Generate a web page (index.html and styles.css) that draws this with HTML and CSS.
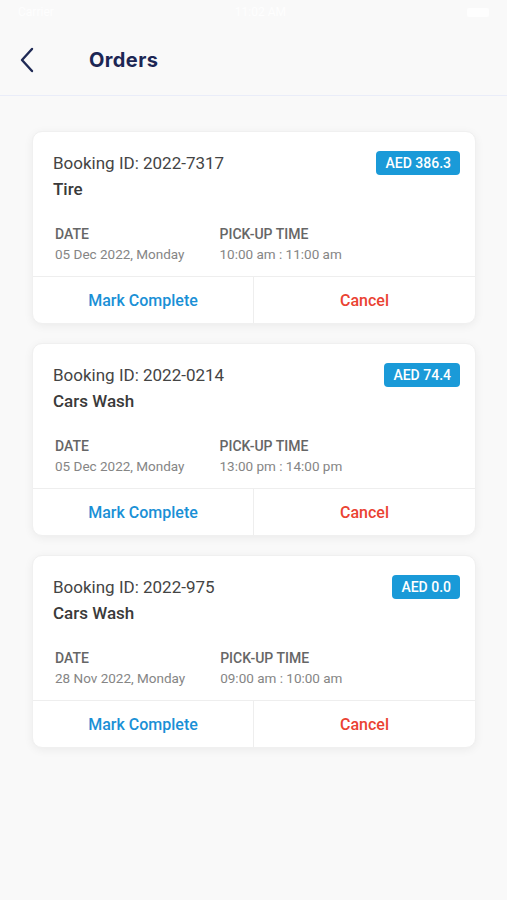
FILE: index.html
```html
<!DOCTYPE html>
<html lang="en">

<head>
  <meta charset="utf-8">
  <meta name="viewport" content="width=device-width, initial-scale=1.0" />
  <title>Orders</title>
  <link rel="stylesheet" href="styles.css">
</head>

<body>
  <div class="status-bar">
    <span>Carrier</span>
    <span>11:02 AM</span>
    <span class="battery"></span>
  </div>
  <header class="nav">
    <a href="#" class="back" aria-label="Back">
      <svg width="16" height="26" viewBox="0 0 16 26">
        <path d="M13 2 L3 13 L13 24" fill="none" stroke="#1f2a55" stroke-width="2.4" stroke-linecap="round" stroke-linejoin="round" />
      </svg>
    </a>
    <h1 class="nav-title">Orders</h1>
  </header>

  <main class="orders">
    <div class="order-card">
      <div class="order-head">
        <div class="booking">Booking ID: 2022-7317</div>
        <span class="price">AED 386.3</span>
      </div>
      <div class="service">Tire</div>
      <div class="order-info">
        <div class="info-col">
          <div class="info-label">DATE</div>
          <div class="info-value">05 Dec 2022, Monday</div>
        </div>
        <div class="info-col">
          <div class="info-label">PICK-UP TIME</div>
          <div class="info-value">10:00 am : 11:00 am</div>
        </div>
      </div>
      <div class="order-actions">
        <a href="#" class="action complete">Mark Complete</a>
        <a href="#" class="action cancel">Cancel</a>
      </div>
    </div>

    <div class="order-card">
      <div class="order-head">
        <div class="booking">Booking ID: 2022-0214</div>
        <span class="price">AED 74.4</span>
      </div>
      <div class="service">Cars Wash</div>
      <div class="order-info">
        <div class="info-col">
          <div class="info-label">DATE</div>
          <div class="info-value">05 Dec 2022, Monday</div>
        </div>
        <div class="info-col">
          <div class="info-label">PICK-UP TIME</div>
          <div class="info-value">13:00 pm : 14:00 pm</div>
        </div>
      </div>
      <div class="order-actions">
        <a href="#" class="action complete">Mark Complete</a>
        <a href="#" class="action cancel">Cancel</a>
      </div>
    </div>

    <div class="order-card">
      <div class="order-head">
        <div class="booking">Booking ID: 2022-975</div>
        <span class="price">AED 0.0</span>
      </div>
      <div class="service">Cars Wash</div>
      <div class="order-info">
        <div class="info-col">
          <div class="info-label">DATE</div>
          <div class="info-value">28 Nov 2022, Monday</div>
        </div>
        <div class="info-col">
          <div class="info-label">PICK-UP TIME</div>
          <div class="info-value">09:00 am : 10:00 am</div>
        </div>
      </div>
      <div class="order-actions">
        <a href="#" class="action complete">Mark Complete</a>
        <a href="#" class="action cancel">Cancel</a>
      </div>
    </div>
  </main>
</body>

</html>
```

FILE: styles.css
```css
body {
  margin: 0;
  background-color: #f9f9f9;
  font-family: Roboto, "Liberation Sans", sans-serif;
  color: #444;
}

a {
  text-decoration: none;
}

.status-bar {
  height: 24px;
  padding: 0 18px;
  display: flex;
  justify-content: space-between;
  align-items: center;
  font-size: 12px;
  color: #fefefe;
}

.battery {
  width: 22px;
  height: 9px;
  border-radius: 2px;
  background-color: #fefefe;
}

.nav {
  height: 71px;
  display: flex;
  align-items: center;
  border-bottom: 1px solid #eaedf9;
}

.back {
  display: flex;
  margin-left: 19px;
  width: 16px;
}

.nav-title {
  margin: 0 0 0 54px;
  font-family: Inter, "Open Sans", sans-serif;
  font-size: 20px;
  font-weight: 700;
  letter-spacing: 0.4px;
  color: #1c2654;
}

.orders {
  padding: 35px 31px 40px 32px;
  display: flex;
  flex-direction: column;
  gap: 19px;
}

.order-card {
  background-color: #fff;
  border-radius: 10px;
  border: 1px solid #f0f0f0;
  box-shadow: 0 2px 10px rgba(0, 0, 0, 0.06);
  overflow: hidden;
}

.order-head {
  display: flex;
  justify-content: space-between;
  align-items: center;
  padding: 19px 15px 0 20px;
}

.booking {
  font-size: 17px;
  line-height: 24px;
  color: #444;
}

.price {
  padding: 0 9px;
  line-height: 24px;
  border-radius: 4px;
  background-color: #1a9ad8;
  color: #fff;
  font-size: 14px;
  font-weight: 500;
}

.service {
  padding-left: 20px;
  font-size: 17px;
  line-height: 28px;
  font-weight: 500;
  color: #3a3a3a;
}

.order-info {
  display: flex;
  gap: 35px;
  padding: 21px 20px 12px 22px;
}

.info-label {
  font-size: 14px;
  line-height: 20px;
  font-weight: 500;
  color: #666;
}

.info-value {
  font-size: 13.5px;
  line-height: 20px;
  color: #858585;
}

.order-actions {
  display: grid;
  grid-template-columns: 1fr 1fr;
  border-top: 1px solid #eeeeee;
}

.action {
  height: 46px;
  display: flex;
  align-items: center;
  justify-content: center;
  font-size: 16px;
  font-weight: 500;
}

.complete {
  color: #1a90d6;
  border-right: 1px solid #eeeeee;
}

.cancel {
  color: #ea4232;
}
```
